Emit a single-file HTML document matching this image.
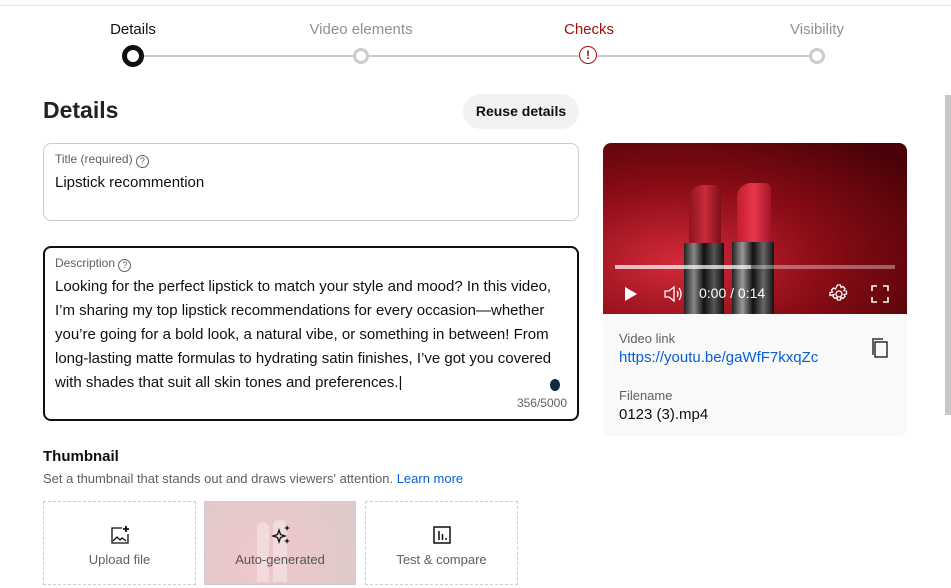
<!DOCTYPE html>
<html><head><meta charset="utf-8"><style>
body{margin:0;width:951px;height:588px;overflow:hidden;background:#fff;font-family:"Liberation Sans",Roboto,sans-serif;position:relative;color:#0f0f0f}
.a{position:absolute}
.step{position:absolute;top:21px;font-size:15px;transform:translateX(-50%);white-space:nowrap}
.dot{position:absolute;width:10px;height:10px;border:3px solid #ccc;border-radius:50%;background:#fff;top:48px;transform:translateX(-50%)}
.box{position:absolute;border:1px solid #ccc;border-radius:8px;box-sizing:border-box}
.lbl{font-size:12px;color:#606060}
.tile{position:absolute;top:501px;height:84px;border:1px dashed #ccc;box-sizing:border-box;text-align:center;font-size:13px;color:#606060}
</style></head><body>
<div class="a" style="left:0;right:0;top:5px;height:1px;background:#e5e5e5"></div>
<div class="step" style="left:133px;color:#0f0f0f">Details</div>
<div class="step" style="left:361px;color:#909090">Video elements</div>
<div class="step" style="left:589px;color:#a50e0e">Checks</div>
<div class="step" style="left:817px;color:#909090">Visibility</div>
<div class="a" style="left:133px;width:684px;top:55px;height:2px;background:#ccc"></div>
<div class="dot" style="left:133px;top:45px;width:12px;height:12px;border:5px solid #0f0f0f"></div>
<div class="dot" style="left:361px"></div>
<div class="a" style="left:579px;top:46px;width:16px;height:16px;border:1.5px solid #a50e0e;border-radius:50%;background:#fff;color:#a50e0e;font-size:12px;font-weight:bold;text-align:center;line-height:16px">!</div>
<div class="dot" style="left:817px"></div>

<div class="a" style="left:43px;top:97px;font-size:23px;font-weight:bold;color:#222">Details</div>
<div class="a" style="left:463px;top:94px;width:116px;height:35px;border-radius:18px;background:#f2f2f2;font-size:14px;font-weight:bold;text-align:center;line-height:35px">Reuse details</div>

<div class="box" style="left:43px;top:143px;width:536px;height:78px">
<div class="a lbl" style="left:11px;top:8px">Title (required) <span style="display:inline-block;width:11px;height:11px;border:1px solid #606060;border-radius:50%;font-size:9px;text-align:center;line-height:11px;vertical-align:-1px">?</span></div>
<div class="a" style="left:11px;top:30px;font-size:15px">Lipstick recommention</div>
</div>
<div class="box" style="left:43px;top:246px;width:536px;height:175px;border:2px solid #0f0f0f">
<div class="a lbl" style="left:10px;top:8px">Description <span style="display:inline-block;width:11px;height:11px;border:1px solid #606060;border-radius:50%;font-size:9px;text-align:center;line-height:11px;vertical-align:-1px">?</span></div>
<div class="a" style="left:10px;top:27px;width:510px;font-size:15px;line-height:24px">Looking for the perfect lipstick to match your style and mood? In this video, I’m sharing my top lipstick recommendations for every occasion—whether you’re going for a bold look, a natural vibe, or something in between! From long-lasting matte formulas to hydrating satin finishes, I’ve got you covered with shades that suit all skin tones and preferences.|</div>
<div class="a" style="left:505px;top:131px;width:10px;height:12px;border-radius:50%;background:#0d2a40"></div>
<div class="a" style="right:10px;top:148px;font-size:12px;color:#606060">356/5000</div>
</div>

<div class="a" style="left:43px;top:448px;font-size:15px;font-weight:bold">Thumbnail</div>
<div class="a" style="left:43px;top:471px;font-size:13px;color:#606060">Set a thumbnail that stands out and draws viewers' attention. <span style="color:#065fd4">Learn more</span></div>
<div class="tile" style="left:43px;width:153px"><svg class="a" style="left:66px;top:23px" width="20" height="20" viewBox="0 0 20 20" fill="none" stroke="#0f0f0f" stroke-width="1.3"><path d="M12 3H2v15h16V9"/><path d="M3 16l4-4 3 3 2-2 4 3"/><path d="M16 1v6M13 4h6" stroke-width="1.8"/></svg><div class="a" style="left:0;right:0;top:50px">Upload file</div></div>
<div class="tile" style="left:204px;width:152px;background:radial-gradient(circle at 40% 70%,#f0c7cb,#dccaca);padding:0"><div class="a" style="left:52px;top:20px;width:12px;height:60px;background:rgba(255,255,255,.35);border-radius:6px 6px 0 0"></div><div class="a" style="left:68px;top:18px;width:14px;height:62px;background:rgba(255,255,255,.35);border-radius:6px 6px 0 0"></div><svg class="a" style="left:66px;top:22px" width="22" height="22" viewBox="0 0 22 22" fill="#0f0f0f"><path d="M8 6l1.5 4.5L14 12l-4.5 1.5L8 18l-1.5-4.5L2 12l4.5-1.5z" fill="none" stroke="#0f0f0f" stroke-width="1.3"/><path d="M16 1l.8 2.2L19 4l-2.2.8L16 7l-.8-2.2L13 4l2.2-.8zM16 14l.8 2.2L19 17l-2.2.8L16 20l-.8-2.2L13 17l2.2-.8z"/></svg><div class="a" style="left:0;right:0;top:50px;color:#555">Auto-generated</div></div>
<div class="tile" style="left:365px;width:153px"><svg class="a" style="left:67px;top:24px" width="18" height="18" viewBox="0 0 18 18" fill="none" stroke="#0f0f0f" stroke-width="1.5"><rect x="1" y="1" width="16" height="16"/><path d="M6 5v9M9.5 8v6M13 12v2"/></svg><div class="a" style="left:0;right:0;top:50px">Test &amp; compare</div></div>

<div class="a" style="left:603px;top:143px;width:304px;height:293px;border-radius:8px;overflow:hidden;background:#f9f9f9">
<div class="a" style="left:0;top:0;width:304px;height:171px;background:radial-gradient(ellipse at 25% 70%,#d42a3a,#8a0c16 45%,#4a0208 90%)">
<div class="a" style="left:86px;top:42px;width:32px;height:60px;background:linear-gradient(90deg,#8c1420,#c92b3a,#7c0f18);border-radius:14px 6px 0 0"></div>
<div class="a" style="left:134px;top:40px;width:34px;height:60px;background:linear-gradient(90deg,#c21c30,#e8364b,#a5142a);border-radius:14px 6px 0 0"></div>
<div class="a" style="left:81px;top:100px;width:40px;height:71px;background:linear-gradient(90deg,#222,#888,#111,#555,#111)"></div>
<div class="a" style="left:129px;top:99px;width:42px;height:72px;background:linear-gradient(90deg,#222,#999,#111,#666,#111)"></div>
<div class="a" style="left:12px;top:122px;width:280px;height:4px;background:rgba(255,255,255,.35)"></div>
<div class="a" style="left:12px;top:122px;width:136px;height:4px;background:rgba(255,255,255,.55)"></div>
<svg class="a" style="left:21px;top:143px" width="14" height="16"><path d="M1 1l12 7-12 7z" fill="#fff"/></svg>
<svg class="a" style="left:60px;top:142px" width="20" height="18" fill="none" stroke="#fff" stroke-width="1.3"><path d="M2 6h4l5-4v14l-5-4H2z"/><path d="M14 6q2 3 0 6M16 3q4 6 0 12"/></svg>
<div class="a" style="left:96px;top:142px;color:#fff;font-size:14px">0:00 / 0:14</div>
<svg class="a" style="left:226px;top:141px" width="20" height="20" fill="none" stroke="#fff" stroke-width="1.3"><circle cx="10" cy="10" r="3"/><path d="M8.5 1h3l.5 2.5 2-1 2 2-1 2 2.5.5v3l-2.5.5 1 2-2 2-2-1-.5 2.5h-3l-.5-2.5-2 1-2-2 1-2L1 11.5v-3l2.5-.5-1-2 2-2 2 1z"/></svg>
<svg class="a" style="left:268px;top:142px" width="18" height="18" fill="none" stroke="#fff" stroke-width="1.6"><path d="M1 6V1h5M12 1h5v5M17 12v5h-5M6 17H1v-5"/></svg>
</div>
<div class="a lbl" style="left:16px;top:188px;font-size:13px">Video link</div>
<div class="a" style="left:16px;top:206px;font-size:15px;color:#065fd4">https://youtu.be/gaWfF7kxqZc</div>
<svg class="a" style="left:268px;top:194px" width="18" height="22" fill="none" stroke="#0f0f0f" stroke-width="1.3"><path d="M2 3v15"/><path d="M1 2h11"/><rect x="4" y="5" width="12" height="15"/></svg>
<div class="a lbl" style="left:16px;top:245px;font-size:13px">Filename</div>
<div class="a" style="left:16px;top:263px;font-size:15px">0123 (3).mp4</div>
</div>
<div class="a" style="left:945px;top:95px;width:6px;height:320px;background:#c8c8c8"></div>
</body></html>
